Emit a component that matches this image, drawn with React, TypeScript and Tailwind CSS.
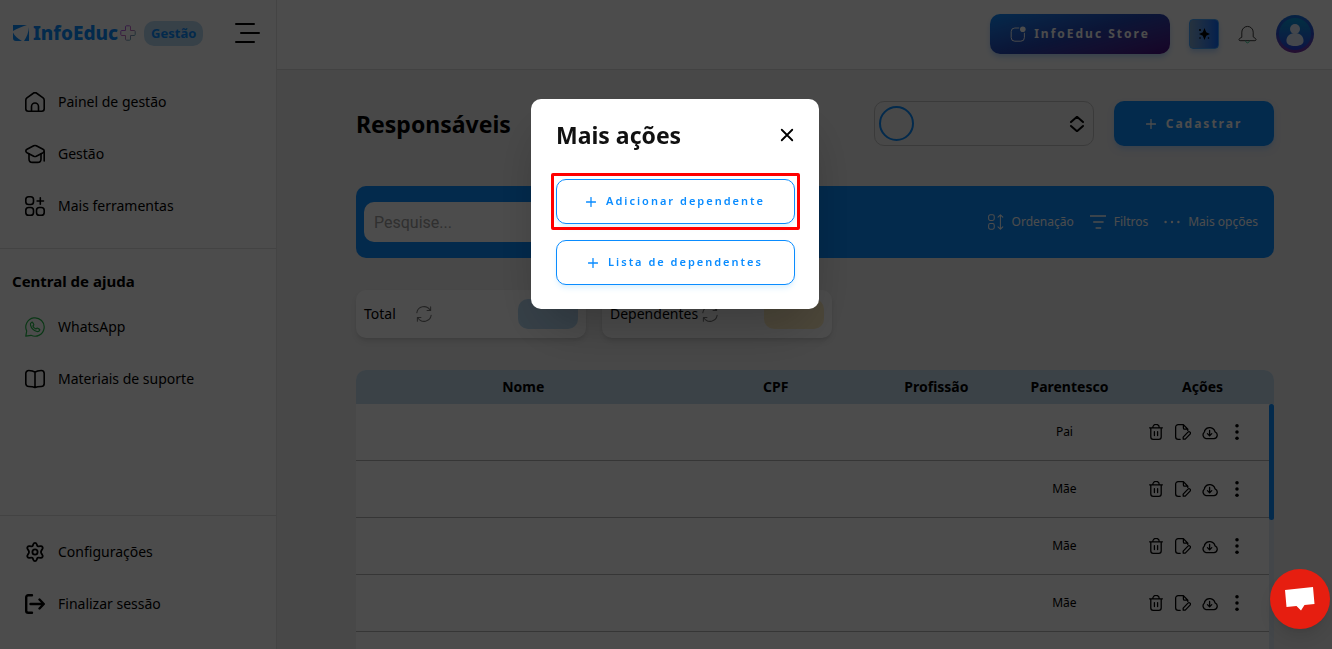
import type { ReactNode, SVGProps } from 'react';

type IconProps = SVGProps<SVGSVGElement>;

const Icon = ({ children, className = 'size-5', ...props }: IconProps) => (
  <svg
    viewBox="0 0 20 20"
    fill="none"
    stroke="currentColor"
    strokeWidth={1.6}
    strokeLinecap="round"
    strokeLinejoin="round"
    aria-hidden="true"
    className={`shrink-0 ${className}`}
    {...props}
  >
    {children}
  </svg>
);

const HomeIcon = () => (
  <Icon>
    <path d="M.8 8.200c0-.9.4-1.800 1.100-2.400L8 1.500a3 3 0 0 1 4 0l6.100 4.300c.7.6 1.100 1.500 1.100 2.400v8.500a2.500 2.500 0 0 1-2.500 2.500H3.300a2.500 2.500 0 0 1-2.500-2.500z" />
    <path d="M6.500 19v-4.500a3.500 3.500 0 0 1 7 0V19" />
  </Icon>
);

const SchoolIcon = () => (
  <Icon>
    <path d="M2 5.300 8.700 1.800a3 3 0 0 1 2.600 0L18 5.300c1.600.9 1.600 2.500 0 3.400l-6.700 3.500a3 3 0 0 1-2.600 0L2 8.700C.4 7.800.4 6.200 2 5.300z" />
    <path d="M4 10v5c0 2 1.500 3.400 3.500 3.400h5c2 0 3.500-1.400 3.500-3.400v-5M19.200 7.500V17" />
  </Icon>
);

const ToolsIcon = () => (
  <Icon>
    <rect x=".8" y=".8" width="7.700" height="7.700" rx="2.800" />
    <rect x=".8" y="11.500" width="7.700" height="7.700" rx="2.800" />
    <rect x="11.500" y="11.500" width="7.700" height="7.700" rx="2.800" />
    <path d="M15.300 1.800v6.400M12.100 5h6.400" />
  </Icon>
);

const WhatsAppIcon = () => (
  <Icon className="size-5 text-[#25b94b]" strokeWidth={1.2}>
    <path d="M.8 19.200 1.700 14A9.200 9.200 0 1 1 6 18.300z" />
    <path d="M6.700 5.200c-1 .5-1.600 1.600-1.200 2.900.8 3 3.300 5.500 6.400 6.400 1.300.3 2.400-.3 2.800-1.300.2-.5 0-.9-.4-1.100l-1.700-.9c-.4-.2-.8-.1-1.100.2l-.6.6c-1.400-.5-2.500-1.600-3-3l.6-.6c.3-.3.4-.7.200-1.100l-.9-1.700c-.2-.4-.7-.6-1.100-.4z" />
  </Icon>
);

const BookIcon = () => (
  <Icon>
    <path d="M10 3.200C8.500 2 6.500 1.500 3.800 1.500A3 3 0 0 0 .8 4.500v10a3 3 0 0 0 3 3c2.700 0 4.700.3 6.200 1 1.500-.7 3.500-1 6.200-1a3 3 0 0 0 3-3v-10a3 3 0 0 0-3-3c-2.700 0-4.700.5-6.200 1.700zM10 3.200v15.300" />
  </Icon>
);

const GearIcon = () => (
  <Icon strokeWidth={1.8}>
    <path d="M8.300 2.200c.6-1.700 2.800-1.700 3.400 0l.5 1.400c.2.600.8.900 1.400.8l1.900-.3c1.700-.3 2.900 1.500 1.900 2.900l-1.100 1.800c-.4.700-.4 1.700 0 2.400l1.100 1.800c1 1.400-.2 3.200-1.900 2.900l-1.900-.3c-.6-.1-1.200.2-1.400.8l-.5 1.400c-.6 1.700-2.800 1.700-3.400 0l-.5-1.400c-.2-.6-.8-.9-1.400-.8l-1.900.3c-1.700.3-2.900-1.500-1.900-2.900l1.100-1.800c.4-.7.4-1.700 0-2.400L2.600 7c-1-1.400.2-3.200 1.900-2.900l1.900.3c.6.100 1.200-.2 1.400-.8z" />
    <circle cx="10" cy="10" r="2.600" />
  </Icon>
);

const LogoutIcon = () => (
  <Icon strokeWidth={2.4}>
    <path d="M7 1.200H3.200a2 2 0 0 0-2 2v13.600a2 2 0 0 0 2 2H7M5.500 10h13M14.500 5.500 18.800 10l-4.300 4.500" />
  </Icon>
);

const PlusIcon = () => (
  <Icon className="size-2.5" strokeWidth={2.6}>
    <path d="M10 1v18M1 10h18" />
  </Icon>
);

const RefreshIcon = () => (
  <Icon className="size-4 text-[#777]" strokeWidth={1.3}>
    <path d="M1 8.500A9 9 0 0 1 17.500 5M19 11.500A9 9 0 0 1 2.500 15M18.300 1v4.500h-4.500M1.700 19v-4.500h4.500" />
  </Icon>
);

const TrashIcon = () => (
  <Icon className="size-4">
    <path d="M2 4.800h16M3.500 4.800v11.400a3 3 0 0 0 3 3h7a3 3 0 0 0 3-3V4.800M6 4.500a4 4 0 0 1 8 0M8 9.500v5M12 9.500v5" />
  </Icon>
);

const EditFileIcon = () => (
  <Icon className="size-4">
    <path d="M6.500 19.200H4A3.200 3.200 0 0 1 .8 16V4A3.200 3.200 0 0 1 4 .8h6.500l5.500 5.700v1.500M10.500 1v4a1.500 1.500 0 0 0 1.500 1.500h4" />
    <path d="m10.300 19-.1-2.600 6-6.200a1.800 1.800 0 0 1 2.600 2.500l-6 6.200z" />
  </Icon>
);

const CloudIcon = () => (
  <Icon className="size-4">
    <path d="M5 18.200h10a4.300 4.300 0 0 0 1.300-8.300A7 7 0 0 0 3.300 8.300c.1.900.1 1.300-.7 2.200A4.600 4.600 0 0 0 5 18.200z" />
    <path d="M9.500 8v6.500M6.800 12l2.700 2.700 2.700-2.700" />
  </Icon>
);

const DotsIcon = () => (
  <Icon className="size-4" fill="currentColor" stroke="none">
    <circle cx="10" cy="2.200" r="2.200" />
    <circle cx="10" cy="10" r="2.200" />
    <circle cx="10" cy="17.800" r="2.200" />
  </Icon>
);

const SortIcon = () => (
  <Icon className="size-4" strokeWidth={1.3}>
    <rect x=".8" y="1" width="7" height="7" rx="2" />
    <rect x=".8" y="12" width="7" height="7" rx="2" />
    <path d="M15.500 1v18M12.500 4l3-3 3 3M12.500 16l3 3 3-3" />
  </Icon>
);

const FilterIcon = () => (
  <Icon className="size-4" strokeLinecap="butt" strokeWidth={1.8}>
    <path d="M0 2.500h20M4 10h13M7 17.500h7" />
  </Icon>
);

const MoreIcon = () => (
  <Icon className="size-4" fill="currentColor" stroke="none">
    <circle cx="2" cy="10" r="1.500" />
    <circle cx="10" cy="10" r="1.500" />
    <circle cx="18" cy="10" r="1.500" />
  </Icon>
);

const Logo = () => (
  <a href="#" className="flex items-center text-[19px] leading-6 font-extrabold text-[#0a8cff]">
    <svg viewBox="0 0 16 16" fill="currentColor" aria-hidden="true" className="mr-1 size-4">
      <path d="M0 0h14C9 1.500 4 3.500 0 6zM0 7.500C1.500 11 5 14 9 16H3a3 3 0 0 1-3-3zM16 2v14h-5C14 12 15.500 7 16 2z" />
    </svg>
    InfoEduc
    <svg viewBox="0 0 16 16" fill="none" aria-hidden="true" className="ml-0.5 size-4">
      <defs>
        <linearGradient id="plus" x1="0" y1="0" x2="1" y2="1">
          <stop offset="0" stopColor="#9a4bff" />
          <stop offset=".5" stopColor="#d070c0" />
          <stop offset="1" stopColor="#25c9b0" />
        </linearGradient>
      </defs>
      <path
        d="M6.500.8h3a1 1 0 0 1 1 1v3.700h3.700a1 1 0 0 1 1 1v3a1 1 0 0 1-1 1h-3.700v3.700a1 1 0 0 1-1 1h-3a1 1 0 0 1-1-1v-3.700H1.800a1 1 0 0 1-1-1v-3a1 1 0 0 1 1-1h3.700V1.800a1 1 0 0 1 1-1z"
        stroke="url(#plus)"
      />
    </svg>
  </a>
);

const NavItem = ({ icon, children }: { icon: ReactNode; children: ReactNode }) => (
  <li>
    <a href="#" className="flex h-13 items-center gap-[13px] pl-[25px] text-sm text-black">
      {icon}
      {children}
    </a>
  </li>
);

const Sidebar = () => (
  <aside className="flex w-[277px] shrink-0 flex-col border-r border-[#e5e5e5] bg-white">
    <div className="flex h-[66px] items-center pl-[13px]">
      <Logo />
      <span className="ml-2 rounded-[10px] bg-[#b8d9f2] px-[7px] text-[13px] leading-[25px] font-bold text-[#0a8cff]">
        Gestão
      </span>
      <button type="button" aria-label="Menu" className="ml-auto mr-4">
        <svg viewBox="0 0 25 20" fill="none" stroke="black" strokeWidth={2} strokeLinecap="round" className="h-5 w-[25px]">
          <path d="M1 1h18M6 10h18M1 19h18" />
        </svg>
      </button>
    </div>
    <nav className="flex grow flex-col">
      <ul className="mt-2.5 border-b border-[#e0e0e0] pb-4">
        <NavItem icon={<HomeIcon />}>Painel de gestão</NavItem>
        <NavItem icon={<SchoolIcon />}>Gestão</NavItem>
        <NavItem icon={<ToolsIcon />}>Mais ferramentas</NavItem>
      </ul>
      <h2 className="flex h-13 items-center pt-3 pl-3 text-[15px] font-bold">Central de ajuda</h2>
      <ul>
        <NavItem icon={<WhatsAppIcon />}>WhatsApp</NavItem>
        <NavItem icon={<BookIcon />}>Materiais de suporte</NavItem>
      </ul>
      <ul className="mt-auto border-t border-[#e0e0e0] pt-2.5 pb-[19px]">
        <NavItem icon={<GearIcon />}>Configurações</NavItem>
        <NavItem icon={<LogoutIcon />}>Finalizar sessão</NavItem>
      </ul>
    </nav>
  </aside>
);

const Header = () => (
  <header className="flex h-[70px] shrink-0 items-center justify-end gap-[19px] border-b border-[#dcdcdc] bg-white pr-[18px] pb-px">
    <button
      type="button"
      className="flex h-10 w-[180px] items-center justify-center gap-2 rounded-[10px] bg-linear-165 from-[#0a8cff] via-[#2546b4] to-[#4b0a82] text-xs font-bold tracking-[2px] text-white shadow-md shadow-blue-200"
    >
      <Icon className="size-4" strokeWidth={1.2}>
        <path d="M11 2.500H6A4.500 4.500 0 0 0 1.500 7v7.500A4.500 4.500 0 0 0 6 19h7.500a4.500 4.500 0 0 0 4.500-4.500V9" />
        <circle cx="16" cy="4" r="3.500" fill="currentColor" stroke="none" />
      </Icon>
      InfoEduc Store
    </button>
    <button
      type="button"
      aria-label="Assistente"
      className="flex size-[30px] items-center justify-center rounded border border-[#4aa8ff] bg-linear-to-r from-[#7fa8d0] to-[#0a6cff] shadow-md shadow-blue-200"
    >
      <svg viewBox="0 0 14 14" className="size-3.5">
        <path d="M7.500 1 9.200 5.200 13 7 9.200 8.800 7.500 13 5.800 8.800 2 7l3.800-1.800z" />
        <circle cx="3" cy="3" r="1" />
        <circle cx="3" cy="11" r=".8" />
        <circle cx="11.500" cy="11" r=".8" />
      </svg>
    </button>
    <button type="button" aria-label="Notificações" className="text-[#333]">
      <Icon className="size-[19px]" strokeWidth={1}>
        <path d="M4 12.500V7.500a6 6 0 0 1 12 0v5l2.500 1.800c.9.700.6 2.200-.7 2.200H2.200c-1.300 0-1.600-1.500-.7-2.200z" />
        <path d="M8 16.800c.3 2.800 3.700 2.800 4 0" stroke="#25c98a" />
      </Icon>
    </button>
    <button
      type="button"
      aria-label="Perfil"
      className="size-[38px] rounded-full bg-linear-to-b from-[#1473e0] via-[#2b4bd0] to-[#7a2fa0] p-[3px]"
    >
      <span className="flex rounded-full bg-linear-to-b from-[#0a9cdc] to-[#2b3fe0]">
        <svg viewBox="0 0 32 32" className="size-8" fill="#e4eeff">
          <circle cx="16" cy="11" r="5" />
          <path d="M16 15c5.500 0 9 4 8.500 8.500-.3 3-4 4.500-8.500 4.500s-8.200-1.500-8.500-4.500C7 19 10.500 15 16 15z" />
        </svg>
      </span>
    </button>
  </header>
);

const StatCard = ({ label, pill, wide }: { label: string; pill: string; wide?: boolean }) => (
  <div className="flex h-12 w-[230px] items-center rounded-[10px] bg-white px-2 text-sm shadow-md">
    {label}
    <button type="button" aria-label={`Atualizar ${label}`} className={wide ? 'ml-1' : 'ml-5'}>
      <RefreshIcon />
    </button>
    <span className={`ml-auto h-[30px] w-[60px] rounded-[10px] ${pill}`} />
  </div>
);

const columns = [
  { name: 'Nome', width: 'w-[36%]' },
  { name: 'CPF', width: 'w-[19%]' },
  { name: 'Profissão', width: 'w-[16%]' },
  { name: 'Parentesco', width: 'w-[13%]' },
  { name: 'Ações', width: 'w-[16%]' },
];

const rows = ['Pai', 'Mãe', 'Mãe', 'Mãe', ''];

const GuardiansTable = () => (
  <div className="relative mt-8 overflow-hidden rounded-t-[10px] bg-white">
    <table className="w-full table-fixed border-separate border-spacing-0 text-center">
      <thead>
        <tr className="h-[34px] bg-[#c5dcee] text-sm">
          {columns.map((column) => (
            <th key={column.name} className={`pl-1 font-bold ${column.width}`}>
              {column.name}
            </th>
          ))}
        </tr>
      </thead>
      <tbody>
        {rows.map((relation, index) => (
          <tr key={index} className="h-[57px] text-xs *:border-b *:border-[#b4b4b4]">
            <td />
            <td />
            <td />
            <td className="pr-1.5">{relation}</td>
            <td className="pr-2">
              {relation && (
                <div className="flex justify-center gap-[11px]">
                  <button type="button" aria-label="Excluir"><TrashIcon /></button>
                  <button type="button" aria-label="Editar"><EditFileIcon /></button>
                  <button type="button" aria-label="Baixar"><CloudIcon /></button>
                  <button type="button" aria-label="Mais"><DotsIcon /></button>
                </div>
              )}
            </td>
          </tr>
        ))}
      </tbody>
    </table>
    <div className="absolute top-[34px] right-0 bottom-0 w-[5px] bg-[#dfebf5]">
      <div className="h-[116px] rounded-sm bg-[#0a8cff]" />
    </div>
  </div>
);

const Toolbar = () => (
  <div className="mt-10 flex h-18 items-center justify-between rounded-[10px] bg-[#0a8cff] pr-4 pl-2">
    <input
      type="search"
      aria-label="Pesquisar"
      placeholder="Pesquise..."
      className="h-10 w-[300px] rounded-[10px] bg-white px-2.5 font-[Roboto,sans-serif] text-base placeholder:text-[#a0a0a0]"
    />
    <div className="flex gap-4 text-xs text-white">
      <button type="button" className="flex items-center gap-2"><SortIcon />Ordenação</button>
      <button type="button" className="flex items-center gap-2"><FilterIcon />Filtros</button>
      <button type="button" className="flex items-center gap-2"><MoreIcon />Mais opções</button>
    </div>
  </div>
);

const ActionButton = ({ children }: { children: ReactNode }) => (
  <button
    type="button"
    className="flex h-[45px] w-full items-center justify-center gap-2.5 rounded-[10px] border border-[#0a8cff] bg-white text-[11px] font-semibold tracking-[2px] text-[#0a8cff] shadow-md shadow-sky-100"
  >
    <PlusIcon />
    {children}
  </button>
);

const ActionsModal = () => (
  <div className="fixed inset-0 flex items-start justify-center bg-black/70 pt-[99px] pl-[18px]">
    <div role="dialog" aria-modal="true" aria-labelledby="modal-title" className="w-72 rounded-[10px] bg-white pr-6 pb-6 pl-[25px] shadow-2xl">
      <div className="flex h-20 items-center justify-between pb-2">
        <h2 id="modal-title" className="text-[23px] leading-8 font-bold text-[#111]">Mais ações</h2>
        <button type="button" aria-label="Fechar" className="mr-px">
          <Icon className="size-3.5" strokeWidth={2.6}>
            <path d="m2.500 2.500 15 15M17.500 2.500l-15 15" />
          </Icon>
        </button>
      </div>
      <div className="flex flex-col gap-4">
        <div className="relative">
          <ActionButton>Adicionar dependente</ActionButton>
          <span className="pointer-events-none absolute -inset-x-[5px] -inset-y-1.5 rounded-xs border-3 border-[#f00]" />
        </div>
        <ActionButton>Lista de dependentes</ActionButton>
      </div>
    </div>
  </div>
);

export default function App() {
  return (
    <div className="flex h-screen overflow-hidden bg-[#f0f0f0] font-['Noto_Sans',sans-serif] text-black">
      <Sidebar />
      <div className="flex min-w-0 grow flex-col overflow-hidden">
        <Header />
        <main className="pt-[31px] pr-[58px] pl-[79px]">
          <div className="flex items-center gap-5">
            <h1 className="mr-auto text-[23px] leading-8 font-bold">Responsáveis</h1>
            <label className="flex h-[45px] w-[220px] items-center rounded-[10px] border border-[#c4c4c4] px-1">
              <span className="size-[35px] shrink-0 rounded-full border-2 border-[#0a8cff]" />
              <select aria-label="Unidade" className="h-full min-w-0 grow appearance-none bg-transparent" />
              <Icon className="mr-1 size-4" strokeWidth={2.5}>
                <path d="m2.500 7.500 7.500-6.500 7.500 6.500M2.500 12.500l7.500 6.500 7.500-6.500" />
              </Icon>
            </label>
            <button
              type="button"
              className="flex h-[45px] w-40 items-center justify-center gap-2.5 rounded-[10px] bg-[#0a8cff] text-xs font-bold tracking-[2px] text-white shadow-md shadow-blue-200"
            >
              <PlusIcon />
              Cadastrar
            </button>
          </div>
          <Toolbar />
          <div className="mt-8 flex gap-4">
            <StatCard label="Total" pill="bg-[#b8d9f2]" />
            <StatCard label="Dependentes" pill="bg-[#ffedc0]" wide />
          </div>
          <GuardiansTable />
        </main>
      </div>
      <ActionsModal />
      <button
        type="button"
        aria-label="Abrir chat"
        className="fixed right-0.5 bottom-5 flex size-15 items-center justify-center rounded-full bg-[#e61e10] shadow-lg"
      >
        <svg viewBox="0 0 30 26" fill="white" className="h-[26px] w-[30px]">
          <path d="M0 4 28 1l1.500 17-10 1-3.500 5.500-4.500-4.500L1.500 21z" />
        </svg>
      </button>
    </div>
  );
}
